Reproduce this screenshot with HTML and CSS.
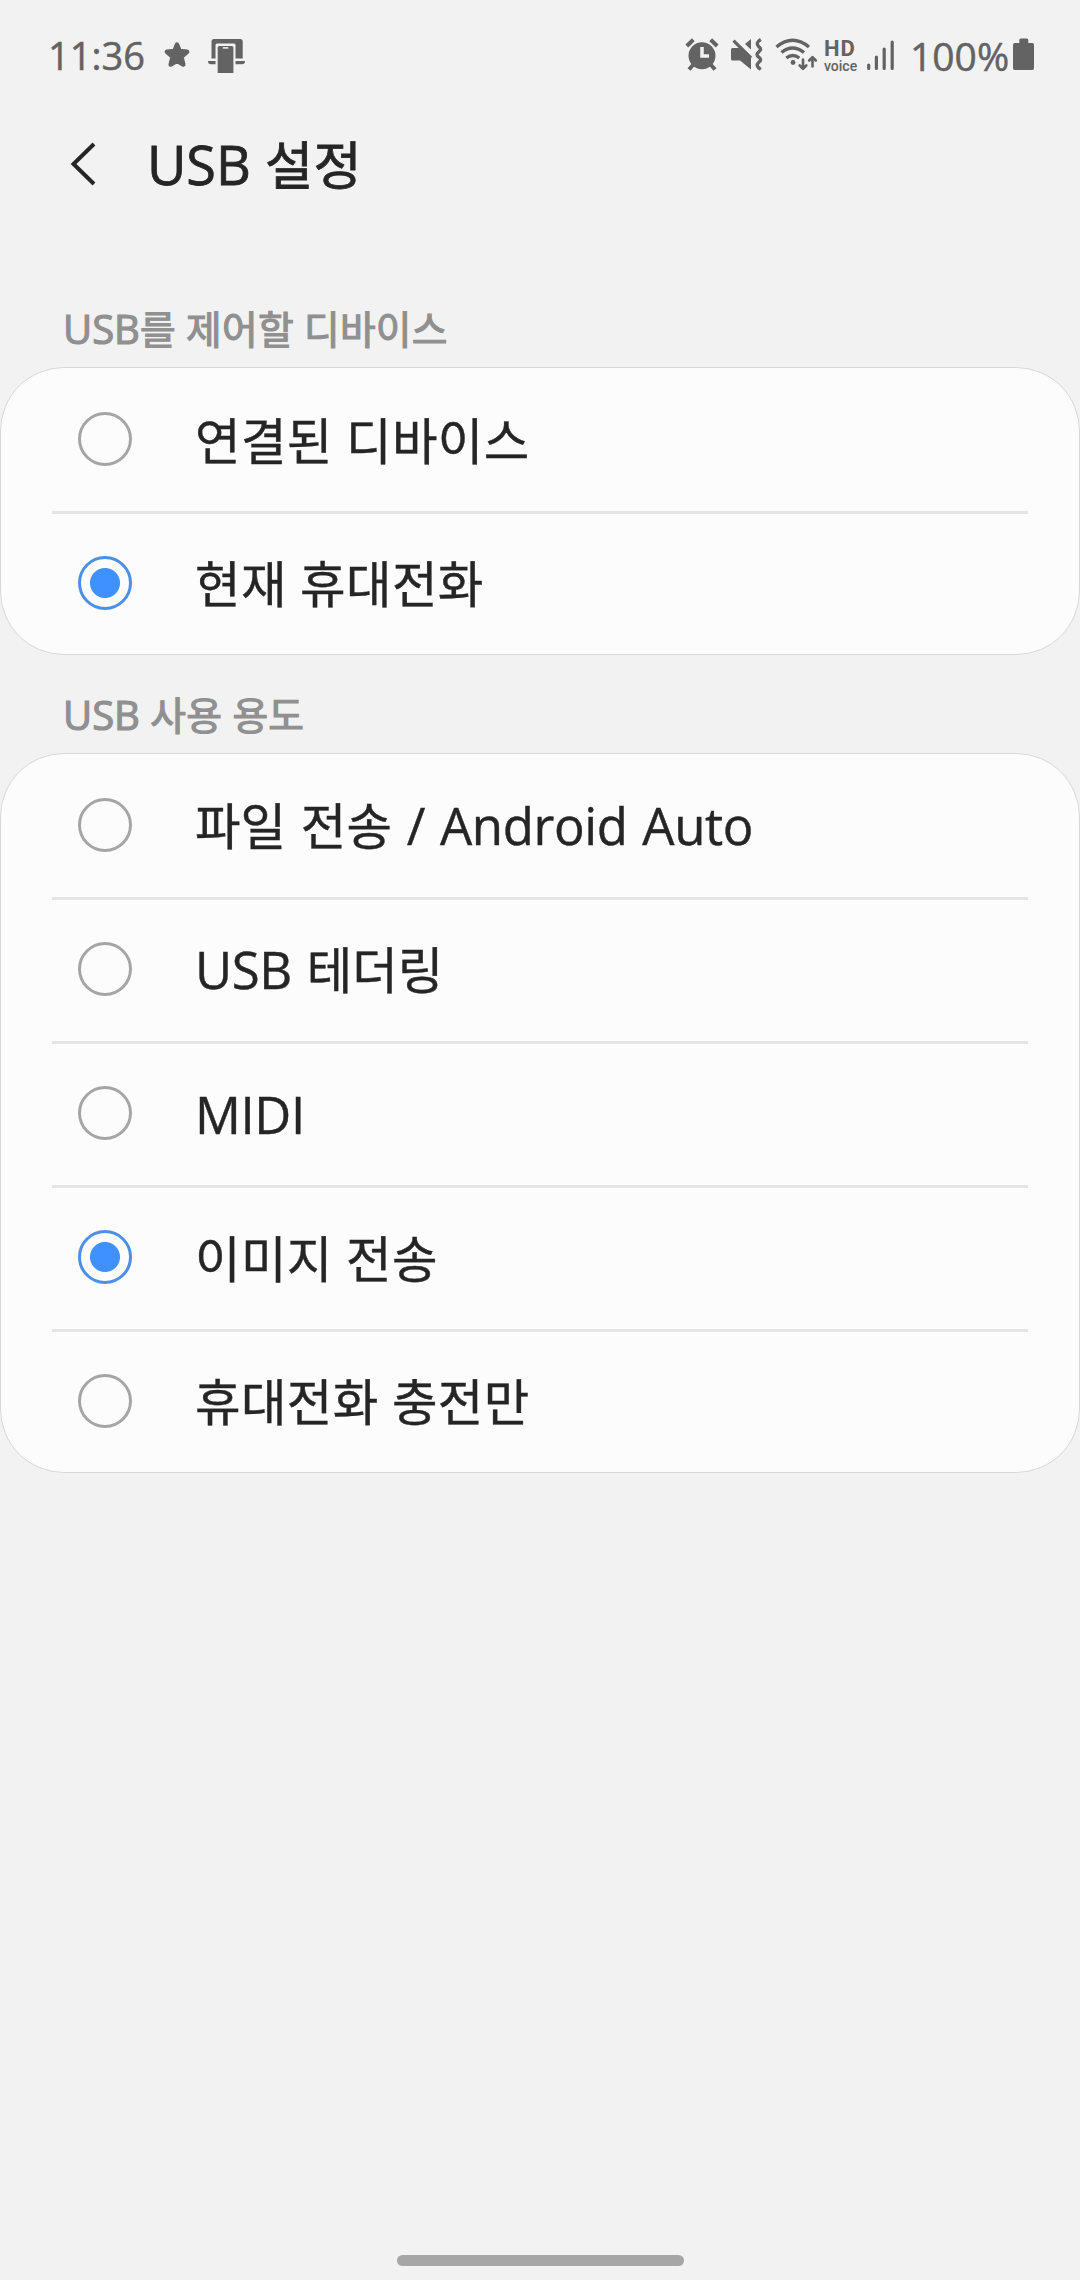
FILE: index.html
```html
<!DOCTYPE html>
<html lang="ko">
<head>
  <meta charset="UTF-8">
  <meta name="viewport" content="width=device-width, initial-scale=1.0">
  <title>USB 설정</title>
  <link rel="stylesheet" href="styles.css">
</head>
<body>
  <div class="status-bar">
    <div class="status-left">
      <span class="clock">11:36</span>
      <svg class="star" width="28" height="38" viewBox="0 0 28 38">
        <path d="M14 8.500l2.600 6.600 7.500.7-5.700 5.100 1.900 7.600-6.300-3.700-6.300 3.700 1.900-7.600-5.700-5.100 7.500-.7z" fill="currentColor" stroke="currentColor" stroke-width="4.500" stroke-linejoin="round"/>
      </svg>
      <svg class="devices" width="38" height="38" viewBox="0 0 38 38">
        <path d="M3.500 22.500V5.500q0-2.500 2.500-2.500h26.200q2.500 0 2.500 2.500v17z" fill="currentColor"/>
        <path d="M0 25h37q0 3.300-3 3.300H3q-3 0-3-3.300z" fill="currentColor"/>
        <path d="M7.500 38V9q0-1.500 1.500-1.500h17q1.500 0 1.500 1.500v29z" fill="#f2f2f2"/>
        <path d="M9.700 37V11.500q0-1.500 1.500-1.500h12.700q1.500 0 1.500 1.500V37z" fill="currentColor"/>
        <path d="M14.800 11.900h5.500" stroke="#f2f2f2" stroke-width="1.500"/>
      </svg>
    </div>
    <div class="status-right">
      <svg class="alarm" width="34" height="38" viewBox="0 0 34 38">
        <circle cx="17" cy="19.700" r="13.500" fill="currentColor"/>
        <path d="M1.800 10l6.500-6.300M32.200 10l-6.500-6.300" stroke="currentColor" stroke-width="4"/>
        <path d="M8 29l-4 4.500M26 29l4 4.500" stroke="currentColor" stroke-width="4"/>
        <path d="M17 11v9h7" fill="none" stroke="#f2f2f2" stroke-width="3.500"/>
      </svg>
      <svg class="mute" width="32" height="38" viewBox="0 0 32 38">
        <path d="M1.500 12H9l11 10v11.500L9 24.500H1.500Q0 24.500 0 23v-9.500Q0 12 1.500 12z" fill="currentColor"/>
        <path d="M20 3v10.500L14 8z" fill="currentColor"/>
        <path d="M2.500 4.700L20 22" stroke="currentColor" stroke-width="3.200"/>
        <path d="M29.800 3.500q-6 3.600-2 7.200 3.600 2.700 0 5.200-3.600 2.600 0 5.200 3.600 2.600 0 5.100-4 3.600 2 7.200" fill="none" stroke="currentColor" stroke-width="3.400"/>
      </svg>
      <svg class="wifi" width="43" height="38" viewBox="0 0 43 38">
        <path d="M1.500 11Q17.500-2.500 34 11M6.500 16.500q11-9 22.500 0M11.300 22q6.500-5 13 0" fill="none" stroke="currentColor" stroke-width="3.400"/>
        <circle cx="18" cy="26.500" r="2.400" fill="currentColor"/>
        <path d="M28 23.500v9M24.700 29.500l3.300 3.300 3.300-3.300M37.500 30.500v-9M34.200 24.500l3.300-3.300 3.300 3.300" fill="none" stroke="currentColor" stroke-width="2.600" stroke-linecap="round" stroke-linejoin="round"/>
      </svg>
      <span class="hd-voice"><b>HD</b><small>voice</small></span>
      <svg class="signal" width="28" height="38" viewBox="0 0 28 38">
        <path d="M1.700 29v3.500M9.400 21v11.500M17.200 13v19.500M25.200 6v26.500" stroke="currentColor" stroke-width="3.200" stroke-linecap="round"/>
      </svg>
      <span class="percent">100%</span>
      <svg class="battery" width="22" height="38" viewBox="0 0 22 38">
        <path d="M6.300 7V4q0-1.500 1.500-1.500h6q1.500 0 1.500 1.500v3h4q1.700 0 1.700 1.700v23.600q0 1.700-1.700 1.700H1.700Q0 34 0 32.300V8.700Q0 7 1.700 7z" fill="currentColor"/>
      </svg>
    </div>
  </div>

  <header class="toolbar">
    <svg class="back" width="26" height="44" viewBox="0 0 26 44">
      <path d="M24 2L3.500 22 24 42" fill="none" stroke="currentColor" stroke-width="4"/>
    </svg>
    <h1>USB <span class="ko">설정</span></h1>
  </header>

  <main>
    <h2>USB<span class="ko">를 제어할 디바이스</span></h2>
    <div class="card">
      <label class="row"><input type="radio" name="control"><span class="ko">연결된 디바이스</span></label>
      <label class="row"><input type="radio" name="control" checked><span class="ko">현재 휴대전화</span></label>
    </div>

    <h2>USB <span class="ko">사용 용도</span></h2>
    <div class="card">
      <label class="row"><input type="radio" name="usage"><span class="mixed"><span class="ko">파일 전송</span> / Android Auto</span></label>
      <label class="row"><input type="radio" name="usage"><span class="mixed">USB <span class="ko">테더링</span></span></label>
      <label class="row"><input type="radio" name="usage"><span class="mixed">MIDI</span></label>
      <label class="row"><input type="radio" name="usage" checked><span class="ko">이미지 전송</span></label>
      <label class="row"><input type="radio" name="usage"><span class="ko">휴대전화 충전만</span></label>
    </div>
  </main>

  <div class="nav-handle"></div>
</body>
</html>
```
FILE: styles.css
```css
* {
  box-sizing: border-box;
}
body {
  margin: 0;
  height: 2280px;
  background: #f2f2f2;
  color: #252525;
  font-family: 'Open Sans', 'Noto Sans CJK KR', sans-serif;
  display: flex;
  flex-direction: column;
  overflow: hidden;
}
svg {
  display: block;
  flex: none;
}

/* status bar */
.status-bar {
  height: 110px;
  padding: 36px 45px 0 48px;
  display: flex;
  justify-content: space-between;
  color: #636363;
}
.status-left, .status-right {
  display: flex;
  height: 38px;
}
.clock, .percent {
  font-size: 38px;
  line-height: 39px;
  white-space: nowrap;
  -webkit-text-stroke: 0.5px currentColor;
}
.clock {
  width: 115px;
}
.devices {
  margin-left: 17px;
}
.mute {
  margin-left: 12px;
}
.wifi {
  margin-left: 12px;
}
.hd-voice {
  width: 36px;
  margin-left: 6px;
  display: flex;
  flex-direction: column;
}
.hd-voice b {
  font-family: Roboto, sans-serif;
  font-size: 22px;
  line-height: 25px;
  letter-spacing: 1px;
}
.hd-voice small {
  font-family: Roboto, sans-serif;
  font-size: 14px;
  font-weight: 500;
  line-height: 10px;
}
.signal {
  margin-left: 7px;
}
.percent {
  width: 103px;
  margin-left: 15px;
  font-size: 39px;
}

/* title */
.toolbar {
  height: 182px;
  padding: 32px 0 0 70px;
  display: flex;
  align-items: flex-start;
}
.back {
  margin-right: 51px;
}
h1 {
  margin: -3px 0 0;
  font-size: 54px;
  line-height: 50px;
  font-weight: 400;
  -webkit-text-stroke: 0.8px currentColor;
}

/* sections */
h2 {
  margin: 0;
  height: 75px;
  padding-left: 63px;
  font-size: 40px;
  line-height: 73px;
  font-weight: 400;
  color: #909090;
  -webkit-text-stroke: 1.2px currentColor;
}
.card {
  background: #fcfcfc;
  border: 1px solid #d8d8d8;
  border-radius: 64px;
  margin-bottom: 23px;
}
.row {
  height: 144px;
  margin: 0 51px;
  padding-left: 26px;
  display: flex;
  align-items: center;
  font-size: 51px;
  line-height: 70px;
  -webkit-text-stroke: 0.4px currentColor;
}
.row:first-child, .row:last-child {
  height: 143px;
}
.row:first-child {
  padding-top: 2px;
}
.row + .row {
  border-top: 3px solid #e5e5e5;
}
.row input {
  appearance: none;
  width: 54px;
  height: 54px;
  margin: 0 63px 3px 0;
  border: 3px solid #a5a5a5;
  border-radius: 50%;
}
.row input:checked {
  border-color: #4b8fe8;
  background: radial-gradient(circle, #3e91ff 14.500px, transparent 15.500px);
}
.ko {
  font-size: 0.97em;
  letter-spacing: 0.4px;
}
h2 .ko {
  letter-spacing: 0.2px;
}
.mixed {
  margin-bottom: 2px;
  letter-spacing: -0.4px;
  word-spacing: 2px;
}
.mixed .ko {
  letter-spacing: 0;
}

.nav-handle {
  width: 287px;
  height: 11px;
  margin: auto auto 14px;
  border-radius: 6px;
  background: #a6a6a6;
}
```
